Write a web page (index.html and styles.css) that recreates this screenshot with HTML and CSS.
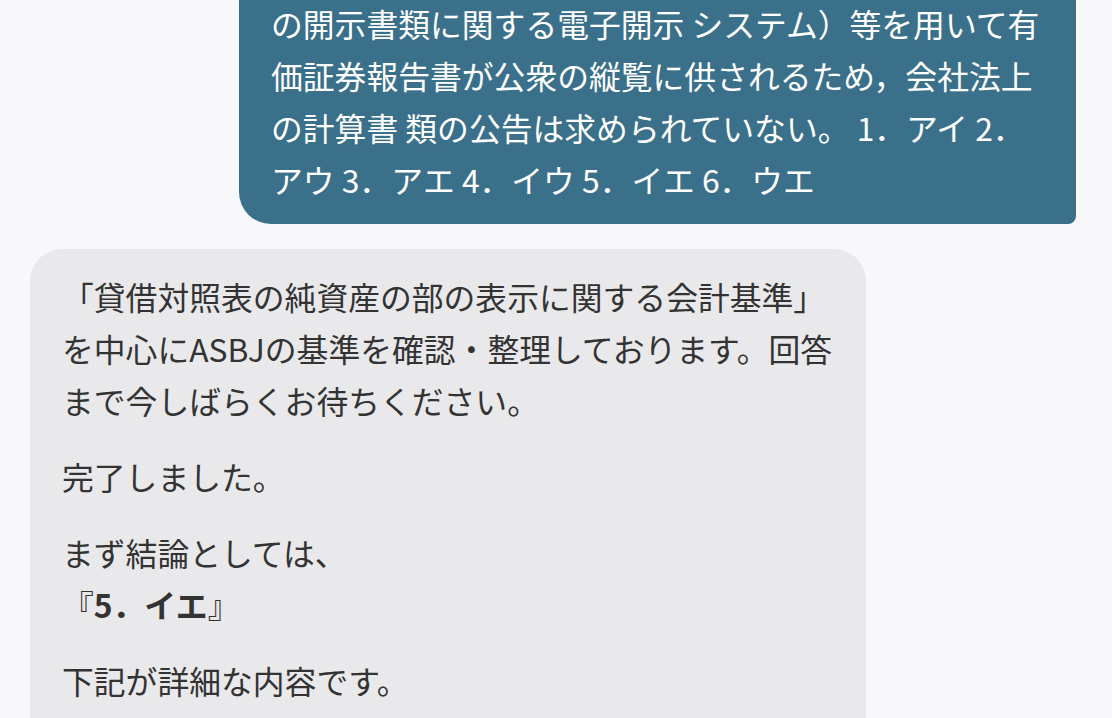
FILE: index.html
```html
<!DOCTYPE html>
<html lang="ja">
<head>
<meta charset="utf-8">
<link rel="stylesheet" href="styles.css">
</head>
<body>
<div class="chat">
  <div class="msg msg-user">
    <p>の開示書類に関する電子開示 システム）等を用いて有価証券報告書が公衆の縦覧に供されるため，会社法上の計算書 類の公告は求められていない。 1．アイ 2．アウ 3．アエ 4．イウ 5．イエ 6．ウエ</p>
  </div>
  <div class="msg msg-bot">
    <p>「貸借対照表の純資産の部の表示に関する会計基準」を中心にASBJの基準を確認・整理しております。回答まで今しばらくお待ちください。</p>
    <p>完了しました。</p>
    <p>まず結論としては、<br>『<strong>5．イエ</strong>』</p>
    <p>下記が詳細な内容です。</p>
  </div>
</div>
</body>
</html>
```
FILE: styles.css
```css
html, body {
  margin: 0;
  padding: 0;
  background: #f8f7fa;
  overflow: hidden;
}
body {
  font-family: "Noto Sans CJK JP", "Noto Sans", sans-serif;
  font-size: 31.8px;
  line-height: 52px;
}
.chat {
  display: flex;
  flex-direction: column;
  gap: 25px;
}
.msg p {
  margin: 0;
}
.msg p + p {
  margin-top: 24px;
}
.msg-user {
  align-self: flex-end;
  box-sizing: border-box;
  width: 837px;
  margin-right: 36px;
  margin-top: -3px;
  padding: 0 26px 19px 32px;
  background: #3a7089;
  color: #ffffff;
  border-radius: 0 0 8px 32px;
}
.msg-bot {
  align-self: flex-start;
  box-sizing: border-box;
  width: 836px;
  margin-left: 30px;
  padding: 21px 26px 40px 32px;
  background: #e9e8eb;
  color: #333333;
  border-radius: 32px 32px 0 0;
}
.msg-bot strong {
  font-weight: 700;
}
```
